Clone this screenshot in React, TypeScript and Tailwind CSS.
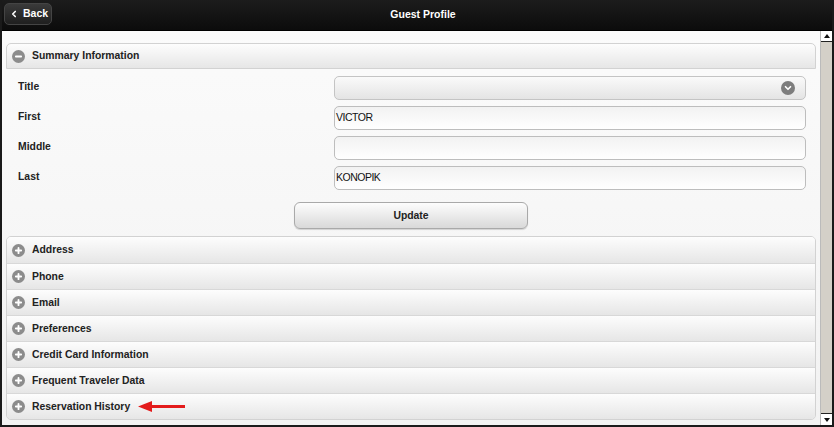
import { ChevronLeft, ChevronDown, Plus, Minus } from 'lucide-react';

interface FieldProps {
    label: string;
    value?: string;
    select?: boolean;
}

const fields: FieldProps[] = [
    { label: 'Title', select: true },
    { label: 'First', value: 'VICTOR' },
    { label: 'Middle', value: '' },
    { label: 'Last', value: 'KONOPIK' },
];

const sections: string[] = [
    'Address',
    'Phone',
    'Email',
    'Preferences',
    'Credit Card Information',
    'Frequent Traveler Data',
    'Reservation History',
];

const CircleIcon = ({ open }: { open: boolean }) => (
    <span className="flex items-center justify-center w-[13px] h-[13px] rounded-full bg-[#8c8c8c]">
        {open ? (
            <Minus className="w-[9px] h-[9px] text-white" strokeWidth={5} />
        ) : (
            <Plus className="w-[9px] h-[9px] text-white" strokeWidth={5} />
        )}
    </span>
);

const App = () => {
    return (
        <div
            className="w-[834px] h-[427px] flex flex-col bg-[#f7f7f7] border-x-2 border-b-2 border-[#1a1a1a] overflow-hidden"
            style={{ fontFamily: '"Liberation Sans", Arial, sans-serif' }}
        >
            {/* header */}
            <div className="h-[31px] shrink-0 flex items-center relative bg-gradient-to-b from-[#1c1c1c] to-[#0c0c0c] border-b border-[#000]">
                <button className="absolute left-[2px] top-[3px] h-[22px] w-[48px] pl-[4px] flex items-center gap-[4px] rounded-[5px] bg-gradient-to-b from-[#3a3a3a] to-[#1f1f1f] border border-[#444] text-white text-[10.5px] font-bold">
                    <ChevronLeft className="w-[10px] h-[10px]" strokeWidth={4} />
                    Back
                </button>
                <div className="flex-1 text-center text-white text-[10.5px] font-bold pl-[12px]">Guest Profile</div>
            </div>

            <div className="flex flex-1 min-h-0">
                <div className="flex-1 px-[4px] pt-[12px] bg-gradient-to-b from-[#fbfbfb] to-[#f2f2f2]">
                    {/* summary */}
                    <div className="h-[26px] flex items-center gap-[7px] pl-[5px] rounded-t-[5px] border border-[#d2d2d2] bg-gradient-to-b from-[#fdfdfd] to-[#e6e6e6] text-[10.4px] font-bold text-[#222]">
                        <CircleIcon open />
                        Summary Information
                    </div>
                    <div className="pt-[7px] pb-[7px]">
                        <div className="flex flex-col gap-[6px]">
                            {fields.map((f) => (
                                <div key={f.label} className="flex items-center h-[24px]">
                                    <div className="w-[328px] pl-[12px] text-[10.4px] font-bold text-[#222] -mt-[2px]">{f.label}</div>
                                    {f.select ? (
                                        <div className="w-[472px] h-[24px] flex items-center justify-end pr-[10px] rounded-[5px] border border-[#c4c4c4] bg-gradient-to-b from-[#fafafa] to-[#e4e4e4]">
                                            <span className="flex items-center justify-center w-[14px] h-[14px] rounded-full bg-[#7d7d7d]">
                                                <ChevronDown className="w-[10px] h-[10px] text-white" strokeWidth={4} />
                                            </span>
                                        </div>
                                    ) : (
                                        <div className="w-[472px] h-[24px] flex items-center pl-[1px] rounded-[5px] border border-[#bdbdbd] bg-gradient-to-b from-[#f2f2f2] to-white text-[10.5px] tracking-[-0.5px] text-[#111]">
                                            {f.value}
                                        </div>
                                    )}
                                </div>
                            ))}
                        </div>
                        <div className="flex justify-center pt-[12px]">
                            <button className="w-[234px] h-[27px] rounded-[6px] border border-[#a9a9a9] bg-gradient-to-b from-[#fdfdfd] to-[#d9d9d9] text-[10.4px] font-bold text-[#222] shadow-[0_1px_1px_rgba(0,0,0,0.15)]">
                                Update
                            </button>
                        </div>
                    </div>

                    {/* collapsed sections */}
                    <div className="border border-[#d2d2d2] rounded-[5px] overflow-hidden">
                        {sections.map((s, i) => (
                            <div
                                key={s}
                                className={`h-[26px] flex items-center gap-[7px] pl-[5px] bg-gradient-to-b from-[#fdfdfd] to-[#e6e6e6] text-[10.4px] font-bold text-[#222] ${i > 0 ? 'border-t border-[#d8d8d8]' : ''}`}
                            >
                                <CircleIcon open={false} />
                                {s}
                                {s === 'Reservation History' && (
                                    <svg width="48" height="11" viewBox="0 0 48 11" className="ml-[1px]">
                                        <polygon points="0,5.5 14,0 14,4 47,4 47,7 14,7 14,11" fill="#e31b1b" />
                                    </svg>
                                )}
                            </div>
                        ))}
                    </div>
                </div>

                {/* scrollbar */}
                <div className="w-[12px] flex flex-col bg-[#d4d0c8] border-l border-[#bbb]">
                    <div className="h-[11px] bg-white flex items-center justify-center border-b border-[#222]">
                        <svg width="6" height="4" viewBox="0 0 6 4">
                            <polygon points="0,4 3,0 6,4" fill="#111" />
                        </svg>
                    </div>
                    <div className="flex-1" />
                    <div className="h-[12px] bg-white flex items-center justify-center border-t border-[#222]">
                        <svg width="6" height="4" viewBox="0 0 6 4">
                            <polygon points="0,0 6,0 3,4" fill="#111" />
                        </svg>
                    </div>
                </div>
            </div>
        </div>
    );
};

export default App;
